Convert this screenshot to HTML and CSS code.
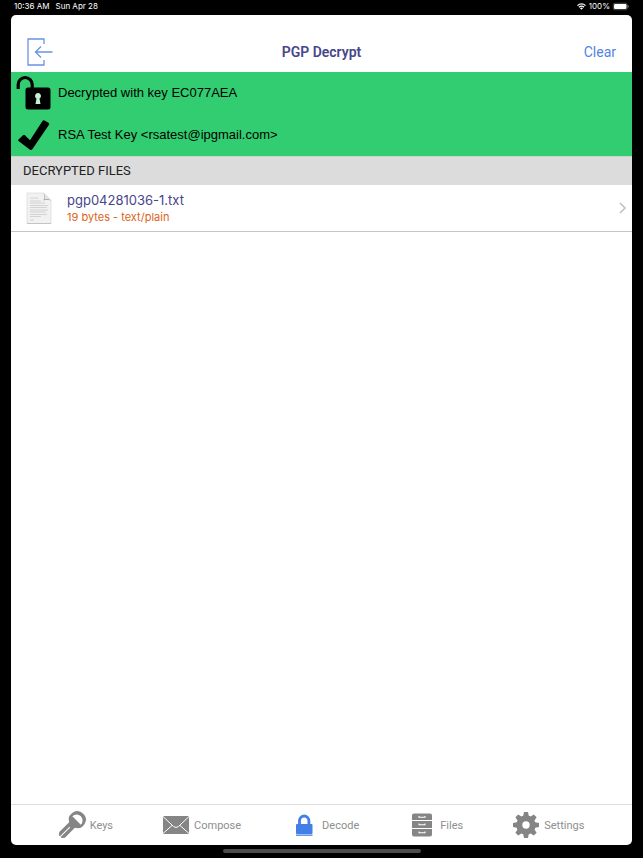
FILE: index.html
```html
<!DOCTYPE html>
<html lang="en">
<head>
    <meta charset="UTF-8">
    <meta name="viewport" content="width=device-width, initial-scale=1.0">
    <title>PGP Decrypt</title>
    <link rel="stylesheet" href="styles.css">
</head>
<body>
    <div class="status-bar">
        <div class="status-group">
            <span>10:36 AM</span>
            <span>Sun Apr 28</span>
        </div>
        <div class="status-right">
            <svg width="9" height="7" viewBox="0 0 18 14" fill="none" stroke="#fff" stroke-width="2.6">
                <path d="M1 5.2a11.3 11.3 0 0 1 16 0M4 8.4a7 7 0 0 1 10 0"/>
                <path d="M9 13.5L6 10.500a4.200 4.200 0 0 1 6 0z" fill="#fff" stroke="none"/>
            </svg>
            <span>100%</span>
            <svg width="16" height="7" viewBox="0 0 16 7">
                <rect x=".25" y=".25" width="14" height="6.500" rx="1.800" fill="none" stroke="#999" stroke-width=".5"/>
                <rect x="1" y="1" width="12.500" height="5" rx="1.200" fill="#fff"/>
                <path d="M14.800 2.300v2.400q1-.4 1-1.200t-1-1.200z" fill="#999"/>
            </svg>
        </div>
    </div>

    <div class="screen">
        <header class="navbar">
            <button class="nav-button" aria-label="Back">
                <svg width="26" height="28" viewBox="0 0 26 28" fill="none" stroke="#6a93e6" stroke-width="1.300">
                    <path d="M17 6V1H1v26h16v-5M25.500 14H9M14 8.500L8.500 14l5.500 5.500"/>
                </svg>
            </button>
            <h1>PGP Decrypt</h1>
            <button class="nav-button clear">Clear</button>
        </header>

        <section class="result">
            <div class="result-row">
                <svg width="36" height="36" viewBox="0 0 36 36">
                    <path d="M2.200 14V9.500a7 7 0 0 1 14 0V15" fill="none" stroke="#000" stroke-width="3.200"/>
                    <rect x="9.500" y="12.500" width="25" height="22" rx="2.500"/>
                    <path d="M22 18a3 3 0 0 1 1.500 5.600l1 5.400h-5l1-5.400A3 3 0 0 1 22 18z" fill="#c4f0d4"/>
                </svg>
                <p>Decrypted with key EC077AEA</p>
            </div>
            <div class="result-row">
                <svg width="36" height="36" viewBox="0 0 36 36">
                    <path d="M2.500 22.500l4.500-4.200q1-.9 2 0l5 5L26.500 4q.8-1.200 2-.5l4 2.300q1.200.8.500 2L16.500 32q-1.500 2-3.200.3L2.500 24q-.8-.7 0-1.500z"/>
                </svg>
                <p>RSA Test Key &lt;rsatest@ipgmail.com&gt;</p>
            </div>
        </section>

        <main>
            <h2>DECRYPTED FILES</h2>
            <a href="#" class="file-row">
                <svg width="26" height="32" viewBox="0 0 26 32">
                    <path d="M1 1h17l7 7v23.500H1z" fill="#f1f1f1" stroke="#dedede" stroke-width=".8"/>
                    <path d="M17 1q2.500 3 .5 7.500Q22 7 25 9z" fill="#999"/>
                    <path d="M18 1q1.500 3 .5 6.500Q22 6.500 25 8z" fill="#e4e4e4"/>
                    <path d="M4 6h8M4 9h11M4 11h15M4 13.500h18M4 15.500h17M4 18h18M4 20h16M4 22.500h17M4 24.500h11M4 28h4" fill="none" stroke="#ccc" stroke-width=".8"/>
                    <path d="M1 31.500h24" stroke="#bbb" stroke-width=".8"/>
                </svg>
                <div class="file-info">
                    <div class="file-name">pgp04281036-1.txt</div>
                    <div class="file-meta">19 bytes - text/plain</div>
                </div>
                <svg width="7" height="12" viewBox="0 0 7 12" fill="none" stroke="#c0c0c4" stroke-width="1.500">
                    <path d="M1 1l5 5-5 5"/>
                </svg>
            </a>
        </main>

        <nav class="tabbar">
            <a href="#" class="tab">
                <svg width="26" height="26" viewBox="0 0 26 26">
                    <g transform="rotate(45 13 13)">
                        <path fill-rule="evenodd" d="M13-3a8.500 8.500 0 0 1 4 16V27l-2 2.500H13.500V16h-1V29.500H11L9 27V13A8.500 8.500 0 0 1 13-3zM7 6.500h12A6 6 0 0 0 7 6.500z"/>
                    </g>
                </svg>
                <span>Keys</span>
            </a>
            <a href="#" class="tab">
                <svg width="26" height="26" viewBox="0 0 26 26">
                    <rect y="4" width="26" height="18"/>
                    <path d="M0 4.500l10.500 10q2.500 2 5 0L26 4.500M0 21.500l9-8M26 21.500l-9-8" fill="none" stroke="#fff" stroke-width="1"/>
                </svg>
                <span>Compose</span>
            </a>
            <a href="#" class="tab active">
                <svg width="26" height="26" viewBox="0 0 26 26">
                    <path d="M8.500 14V9a4.700 5 0 0 1 9.400 0v5" fill="none" stroke="#437fe6" stroke-width="2.800"/>
                    <rect x="5" y="12" width="16.500" height="10" rx="1"/>
                    <rect x="5" y="22.500" width="16.500" height="1.300"/>
                </svg>
                <span>Decode</span>
            </a>
            <a href="#" class="tab">
                <svg width="26" height="26" viewBox="0 0 26 26">
                    <path d="M5 1.500h16q2 0 2 2V8H3V3.500q0-2 2-2zM3 9h20v7H3zM3 17h20v5.500q0 2-2 2H5q-2 0-2-2z"/>
                    <path d="M10 4v1.300h6V4M10 11.500v1.300h6v-1.300M10 19.500v1.300h6v-1.300" fill="none" stroke="#fff" stroke-width="1.100"/>
                </svg>
                <span>Files</span>
            </a>
            <a href="#" class="tab">
                <svg width="26" height="26" viewBox="0 0 26 26">
                    <path d="M11 0h4l1 5h-6zM11 26h4l1-5h-6zM0 11v4l5 1v-6zM26 11v4l-5 1v-6z"/>
                    <path transform="rotate(45 13 13)" d="M11 0h4l1 5h-6zM11 26h4l1-5h-6zM0 11v4l5 1v-6zM26 11v4l-5 1v-6z"/>
                    <circle cx="13" cy="13" r="6.700" fill="none" stroke="#858585" stroke-width="6"/>
                </svg>
                <span>Settings</span>
            </a>
        </nav>
    </div>

    <div class="home-area">
        <div class="home-indicator"></div>
    </div>
</body>
</html>
```

FILE: styles.css
```css
* {
    box-sizing: border-box;
}

body {
    font-family: Inter, "Liberation Sans", sans-serif;
    margin: 0;
    min-height: 100vh;
    display: flex;
    flex-direction: column;
    background-color: #000;
}

svg {
    display: block;
    flex: none;
    overflow: visible;
}

h1, h2, p {
    margin: 0;
    font-weight: normal;
}

button {
    border: none;
    background: none;
    padding: 0;
    font-family: inherit;
    cursor: pointer;
}

a {
    color: inherit;
    text-decoration: none;
}

.status-bar {
    height: 15px;
    padding: 0 14px;
    display: flex;
    justify-content: space-between;
    color: #fff;
    font-size: 8px;
    line-height: 13px;
}

.status-group {
    display: flex;
    gap: 6px;
}

.status-right {
    display: flex;
    align-items: center;
    gap: 3px;
    height: 13px;
}

.screen {
    flex: 1;
    margin: 0 11px;
    display: flex;
    flex-direction: column;
    font-family: Roboto, "Liberation Sans", sans-serif;
    background-color: #fff;
    border-radius: 5px;
    overflow: hidden;
}

.navbar {
    height: 57px;
    padding: 16px 16px 0;
    display: grid;
    grid-template-columns: 1fr auto 1fr;
    align-items: center;
}

.navbar h1 {
    font-size: 14px;
    font-weight: 600;
    color: #47458c;
}

.nav-button {
    justify-self: start;
}

.nav-button.clear {
    justify-self: end;
    font-size: 14px;
    color: #5284e0;
}

.result {
    background-color: #32cd70;
}

.result-row {
    height: 42px;
    padding: 0 5px;
    display: flex;
    align-items: center;
    gap: 6px;
    font-family: "Liberation Sans", Arial, sans-serif;
    font-size: 13px;
    color: #000;
}

.result-row p {
    padding-bottom: 2px;
}

main {
    flex: 1;
}

h2 {
    padding: 0 12px;
    border-top: 1px solid #c9d6cd;
    font-size: 13px;
    line-height: 28px;
    color: #222;
    background-color: #dcdcdc;
}

.file-row {
    height: 47px;
    padding: 0 6px 0 15px;
    display: flex;
    align-items: center;
    gap: 15px;
    border-bottom: 1px solid #c4c4c4;
}

.file-info {
    flex: 1;
    font-family: Inter, "Liberation Sans", sans-serif;
}

.file-name {
    font-size: 13px;
    line-height: 18px;
    color: #47458c;
}

.file-meta {
    font-size: 11px;
    line-height: 16px;
    color: #dc6420;
}

.tabbar {
    height: 41px;
    display: flex;
    align-items: center;
    justify-content: center;
    gap: 50px;
    border-top: 1px solid #dedede;
}

.tab {
    display: flex;
    align-items: center;
    gap: 5px;
    font-size: 11px;
    color: #8e8e8e;
    fill: #858585;
}

.tab.active {
    fill: #437fe6;
}

.home-area {
    height: 13px;
    padding-top: 4px;
}

.home-indicator {
    width: 198px;
    height: 4px;
    margin: 0 auto;
    border-radius: 2px;
    background-color: #4c4c4c;
}
```
